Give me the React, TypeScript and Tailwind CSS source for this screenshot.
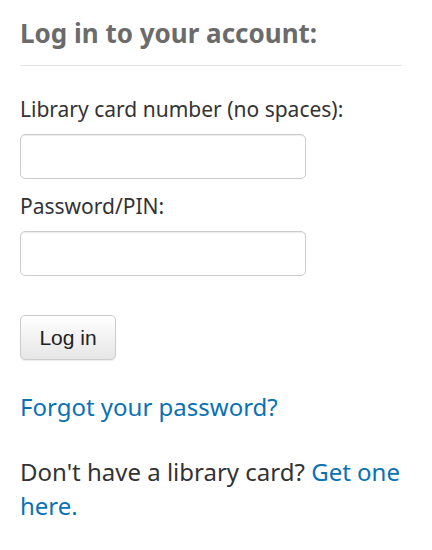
import React from "react";

export default function App() {
  return (
    <div className="bg-white w-[432px] h-[550px] px-5 pt-[15px] font-['Noto_Sans',sans-serif] text-[#333333]">
      <h2 className="text-[26px] font-bold text-[#6b6b6b] leading-[36px] pb-[14px] border-b border-[#e5e5e5] w-[382px]">
        Log in to your account:
      </h2>
      <form className="flex flex-col" onSubmit={(e) => e.preventDefault()}>
        <label className="text-[21px] leading-[28px] mt-[29px]">Library card number (no spaces):</label>
        <input
          type="text"
          className="mt-[11px] w-[286px] h-[45px] border border-[#cccccc] rounded-[5px] bg-white shadow-[inset_0_1px_1px_rgba(0,0,0,0.075)]"
        />
        <label className="text-[21px] leading-[28px] mt-[13px]">Password/PIN:</label>
        <input
          type="password"
          className="mt-[11px] w-[286px] h-[45px] border border-[#cccccc] rounded-[5px] bg-white shadow-[inset_0_1px_1px_rgba(0,0,0,0.075)]"
        />
        <div className="mt-[39px]">
          <button
            type="submit"
            className="w-[96px] h-[45px] border border-[#cccccc] rounded-[5px] bg-gradient-to-b from-white to-[#e6e6e6] shadow-[0_1px_1px_rgba(0,0,0,0.08)] font-['Liberation_Sans',sans-serif] text-[21px] text-[#222]"
          >
            Log in
          </button>
        </div>
      </form>
      <p className="mt-[30px] text-[24px] leading-[34px]">
        <a href="#" className="text-[#0a72b4]">Forgot your password?</a>
      </p>
      <p className="mt-[31px] text-[24px] leading-[34px]">
        Don't have a library card? <a href="#" className="text-[#0a72b4]">Get one here.</a>
      </p>
    </div>
  );
}
